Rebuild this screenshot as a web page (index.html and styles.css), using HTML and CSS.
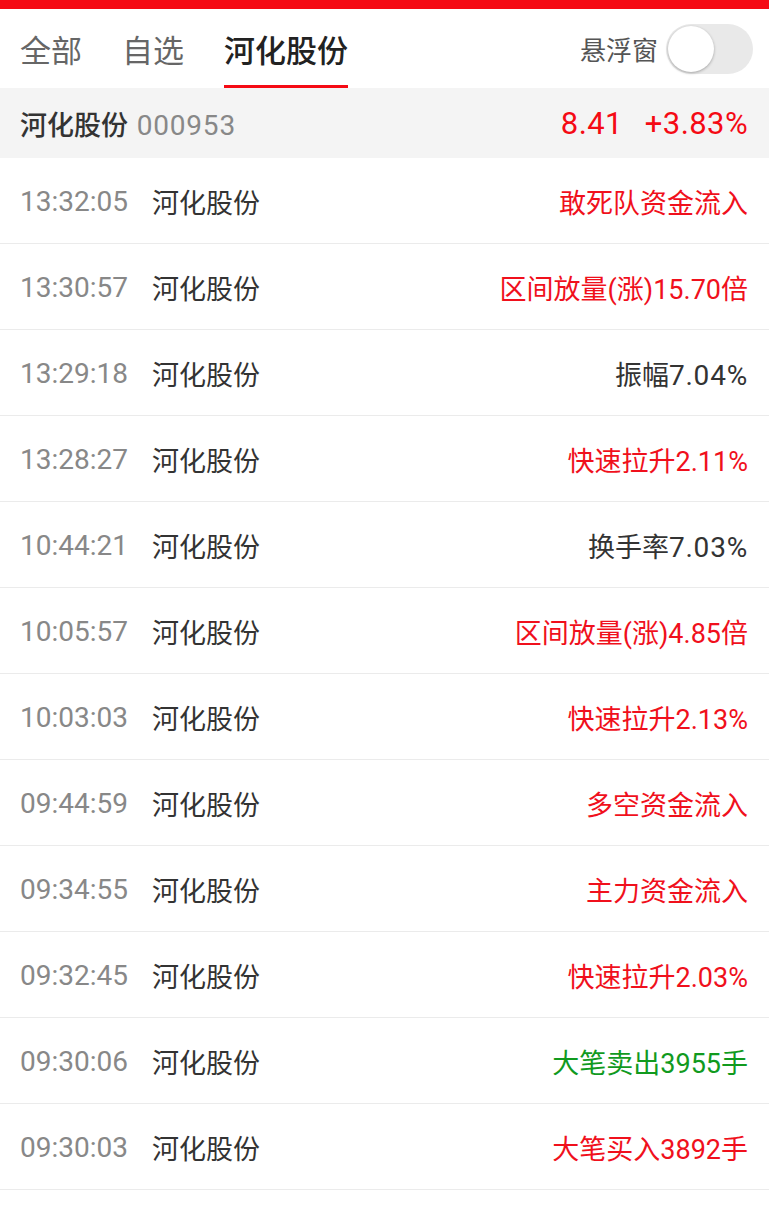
FILE: index.html
```html
<!DOCTYPE html>
<html lang="zh-CN">
  <head>
    <meta charset="UTF-8" />
    <meta name="viewport" content="width=device-width, initial-scale=1.0" />
    <title>河化股份 异动</title>
    <link rel="stylesheet" href="styles.css">
  </head>
  <body>
    <div class="topbar"></div>
    <div class="tabs">
      <div class="tab">全部</div>
      <div class="tab">自选</div>
      <div class="tab active">河化股份</div>
      <div class="float-switch">
        <span>悬浮窗</span>
        <div class="toggle"><div class="knob"></div></div>
      </div>
    </div>
    <div class="stock-head">
      <div class="stock-name">河化股份 <span class="code">000953</span></div>
      <div class="stock-price"><span>8.41</span><span>+3.83%</span></div>
    </div>
    <ul class="list">
      <li><span class="time">13:32:05</span><span class="name">河化股份</span><span class="msg up">敢死队资金流入</span></li>
      <li><span class="time">13:30:57</span><span class="name">河化股份</span><span class="msg up">区间放量(涨)15.70倍</span></li>
      <li><span class="time">13:29:18</span><span class="name">河化股份</span><span class="msg">振幅<span class="num">7.04%</span></span></li>
      <li><span class="time">13:28:27</span><span class="name">河化股份</span><span class="msg up">快速拉升2.11%</span></li>
      <li><span class="time">10:44:21</span><span class="name">河化股份</span><span class="msg">换手率<span class="num">7.03%</span></span></li>
      <li><span class="time">10:05:57</span><span class="name">河化股份</span><span class="msg up">区间放量(涨)4.85倍</span></li>
      <li><span class="time">10:03:03</span><span class="name">河化股份</span><span class="msg up">快速拉升2.13%</span></li>
      <li><span class="time">09:44:59</span><span class="name">河化股份</span><span class="msg up">多空资金流入</span></li>
      <li><span class="time">09:34:55</span><span class="name">河化股份</span><span class="msg up">主力资金流入</span></li>
      <li><span class="time">09:32:45</span><span class="name">河化股份</span><span class="msg up">快速拉升2.03%</span></li>
      <li><span class="time">09:30:06</span><span class="name">河化股份</span><span class="msg down">大笔卖出3955手</span></li>
      <li><span class="time">09:30:03</span><span class="name">河化股份</span><span class="msg up">大笔买入3892手</span></li>
    </ul>
  </body>
</html>
```
FILE: styles.css
```css
body {
  margin: 0;
  font-family: Roboto, "Noto Sans CJK SC", sans-serif;
  background-color: #ffffff;
  color: #333333;
}
.topbar {
  height: 9px;
  background-color: #f50a14;
}
.tabs {
  display: flex;
  align-items: stretch;
  height: 79px;
  padding: 0 16px 0 20px;
}
.tab {
  display: flex;
  align-items: center;
  margin-right: 40px;
  font-size: 31px;
  color: #666666;
  border-bottom: 3px solid transparent;
  padding-top: 3px;
}
.tab.active {
  color: #222222;
  font-weight: 500;
  border-bottom-color: #f50a14;
}
.float-switch {
  margin-left: auto;
  display: flex;
  align-items: center;
  gap: 8px;
  font-size: 26px;
  color: #555555;
}
.toggle {
  width: 87px;
  height: 50px;
  border-radius: 25px;
  background-color: #e9e9e9;
  padding: 2px;
  box-sizing: border-box;
}
.knob {
  width: 46px;
  height: 46px;
  border-radius: 50%;
  background-color: #ffffff;
  box-shadow: 0 1px 3px rgba(0, 0, 0, 0.3);
}
.stock-head {
  display: flex;
  justify-content: space-between;
  align-items: center;
  height: 70px;
  padding: 0 21px 0 20px;
  background-color: #f4f4f4;
}
.stock-name {
  font-size: 27px;
  font-weight: 500;
  color: #333333;
}
.code {
  font-size: 28px;
  font-weight: normal;
  letter-spacing: 0.8px;
  color: #888888;
  margin-left: 2px;
}
.stock-price {
  display: flex;
  gap: 22px;
  font-size: 31px;
  letter-spacing: 0.4px;
  color: #f50a14;
}
.list {
  list-style: none;
  margin: 0;
  padding: 0;
}
.list li {
  display: flex;
  align-items: center;
  height: 84px;
  padding: 1px 21px 0 20px;
  border-bottom: 1px solid #ebebeb;
}
.time {
  width: 132px;
  font-size: 28px;
  color: #888888;
}
.name {
  font-size: 27px;
  color: #333333;
}
.msg {
  margin-left: auto;
  font-size: 27px;
  color: #333333;
}
.msg .num {
  font-size: 28px;
  letter-spacing: 0.8px;
}
.msg.up {
  color: #f0101c;
}
.msg.down {
  color: #119a1e;
}
```
